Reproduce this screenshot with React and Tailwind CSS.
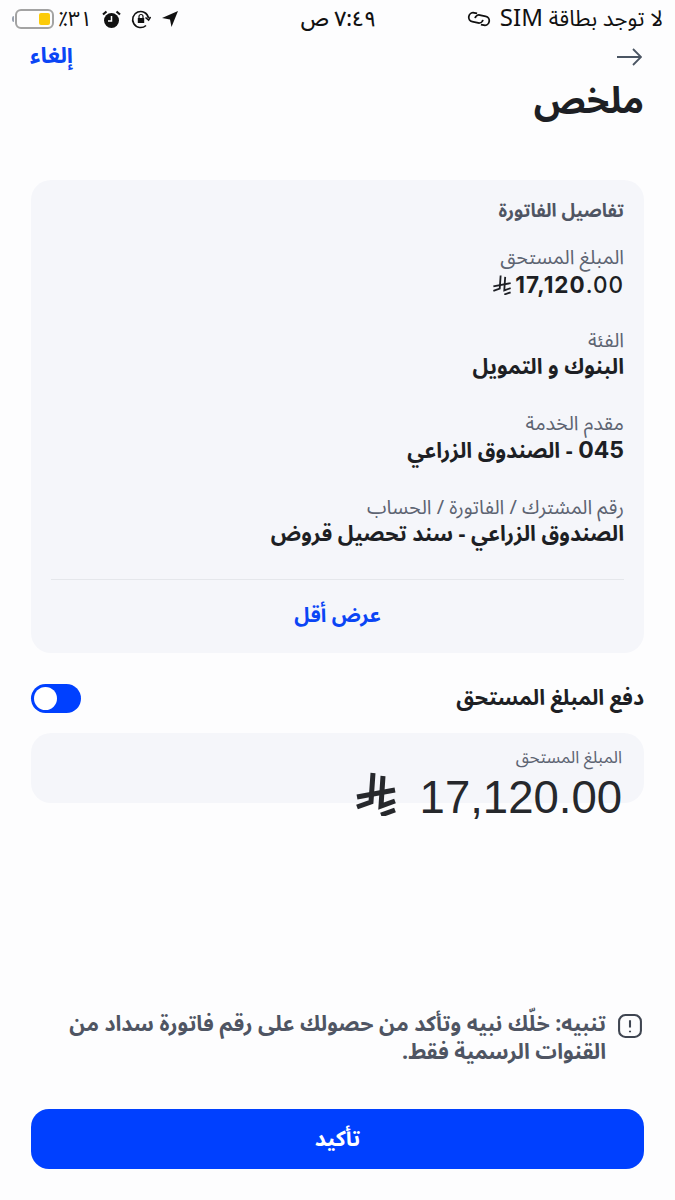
import React from 'react';

const font = { fontFamily: '"Noto Sans Arabic", "DejaVu Sans", sans-serif' };

// New riyal sign, drawn as strokes because no font here carries it
const RiyalSign = ({ className, weight = 5 }) => (
    <svg viewBox="0 0 40 44" className={className} fill="none" stroke="currentColor" strokeWidth={weight}>
        <path d="M17 1 L15 30 L1 35" />
        <path d="M1 25 L39 18" />
        <path d="M27 4 L25 34 L39 29" />
        <path d="M25 43 L39 38" />
    </svg>
);

const StatusBar = () => (
    <div className="flex h-[38px] shrink-0 items-center justify-between pl-[12px] pr-[12px] text-[21px] leading-[26px] text-[#111]">
        <div className="flex items-center gap-[8px]">
            <span className="text-[22px]">لا توجد بطاقة <span className="text-[24px]">SIM</span></span>
            <svg width="26" height="16" viewBox="0 0 26 16" fill="none" stroke="#111" strokeWidth="1.8" className="rotate-[12deg]">
                <path d="M10 3 H7 a4.5 4.5 0 0 0 0 9 H13 a4 4 0 0 0 4 -4" />
                <path d="M16 13 H19 a4.5 4.5 0 0 0 0 -9 H13 a4 4 0 0 0 -4 4" />
            </svg>
        </div>
        <span className="ml-[32px] font-medium">٧:٤٩ ص</span>
        <div className="flex items-center gap-[10px]">
            <svg width="18" height="18" viewBox="0 0 18 18" fill="#111"><path d="M17 1 L1 8 L9 9.5 L10.5 17 Z" /></svg>
            <svg width="20" height="20" viewBox="0 0 20 20" fill="none" stroke="#111" strokeWidth="1.6">
                <path d="M17.5 9 A8 8 0 1 0 15 16.5" />
                <path d="M14.5 8.5 L17.6 11 L19.5 8" />
                <rect x="6.8" y="9" width="6.4" height="5" fill="#111" stroke="none" />
                <path d="M8 9 V7.5 a2 2 0 0 1 4 0 V9" strokeWidth="1.2" />
            </svg>
            <svg width="19" height="19" viewBox="0 0 19 19">
                <circle cx="9.5" cy="10.5" r="7.5" fill="#111" />
                <path d="M9.5 6 V11 H6" fill="none" stroke="#fff" strokeWidth="1.5" />
                <path d="M1 4.5 L4.5 1.5 M18 4.5 L14.5 1.5" stroke="#111" strokeWidth="2.2" />
            </svg>
            <div className="flex items-center gap-[4px]">
                <span>٣١٪</span>
                <div className="flex items-center" dir="ltr">
                    <div className="h-[6px] w-[2px] rounded-l-sm bg-gray-400"></div>
                    <div className="ml-[1px] flex h-[20px] w-[39px] justify-end rounded-[6px] border-2 border-[#a3a3a3] p-[2px]">
                        <div className="w-[11px] rounded-[2px] bg-[#fccb0a]"></div>
                    </div>
                </div>
            </div>
        </div>
    </div>
);

const Field = ({ label, children }) => (
    <div className="mb-[31px]">
        <p className="text-[19.8px] leading-[25px] text-[#5d6472]">{label}</p>
        <div className="text-[21.4px] font-bold leading-[27px] text-[#1d1f24]">{children}</div>
    </div>
);

const App = () => {
    return (
        <div dir="rtl" style={font} className="flex h-[1200px] w-[675px] flex-col overflow-hidden bg-[#fdfdfe]">
            <StatusBar />

            <div className="flex h-[38px] items-center justify-between pl-[30px] pr-[33px]">
                <svg width="25" height="18" viewBox="0 0 25 18" fill="none" stroke="#4b5563" strokeWidth="1.8">
                    <path d="M0 9 H24 M16 1 L24 9 L16 17" />
                </svg>
                <button className="text-[22.5px] font-bold text-[#0b45f5]">إلغاء</button>
            </div>
            <h1 className="pr-[31px] text-[36.5px] font-bold leading-[52px] text-[#1d1f24]">ملخص</h1>

            <div className="mx-[31px] mt-[52px] h-[473px] rounded-[20px] bg-[#f5f6fa] px-[20px] pt-[18px]">
                <h2 className="mb-[20px] text-[18.5px] font-bold leading-[28px] text-[#4f5563]">تفاصيل الفاتورة</h2>
                <Field label="المبلغ المستحق">
                    <div dir="ltr" className="flex items-center justify-end gap-[3px] font-['Inter'] text-[22.5px] tracking-[1px]">
                        <RiyalSign className="h-[20px] w-[20px]" weight={4} />
                        <span>17,120<span className="font-medium">.00</span></span>
                    </div>
                </Field>
                <Field label="الفئة">البنوك و التمويل</Field>
                <Field label="مقدم الخدمة"><span className="font-['Inter'] text-[23px] tracking-[0.5px]">045</span> - الصندوق الزراعي</Field>
                <Field label="رقم المشترك / الفاتورة / الحساب">الصندوق الزراعي - سند تحصيل قروض</Field>
                <div className="mt-[11px] border-t border-[#e5e7eb] pt-[22px] text-center text-[20.5px] font-bold leading-[28px] text-[#0b45f5]">عرض أقل</div>
            </div>

            <div className="mx-[31px] mt-[31px] flex h-[29px] items-center justify-between">
                <span className="text-[21.5px] font-bold text-[#1d1f24]">دفع المبلغ المستحق</span>
                <div dir="ltr" className="flex h-[29px] w-[50px] items-center rounded-full bg-[#0040ff] pl-[3px]">
                    <div className="h-[23px] w-[23px] rounded-full bg-white"></div>
                </div>
            </div>

            <div className="mx-[31px] mt-[20px] h-[70px] rounded-[20px] bg-[#f5f6fa] px-[22px] pt-[12px]">
                <p className="text-[17px] leading-[27px] text-[#5d6472]">المبلغ المستحق</p>
                <div dir="ltr" className="flex items-center justify-end gap-[23px] text-[#26282c]">
                    <RiyalSign className="h-[44px] w-[42px] -translate-y-[4px]" />
                    <span className="font-['Liberation_Sans'] text-[45.5px] leading-[52px]">17,120.00</span>
                </div>
            </div>

            <div className="mx-[31px] mt-auto flex items-start gap-[11px] pl-[29px] pr-[1px]">
                <svg width="26" height="26" viewBox="0 0 25 25" fill="none" stroke="#3f4551" strokeWidth="2" className="mt-[2px] shrink-0">
                    <rect x="2" y="2" width="21" height="21" rx="6" />
                    <path d="M12.5 7 V14 M12.5 17 V18.5" />
                </svg>
                <p className="text-[21.4px] font-bold leading-[28px] text-[#4f5563]">تنبيه: خلّك نبيه وتأكد من حصولك على رقم فاتورة سداد من القنوات الرسمية فقط.</p>
            </div>

            <button className="mx-[31px] mb-[31px] mt-[42px] h-[60px] shrink-0 rounded-[18px] bg-[#0040ff] text-[21.5px] font-bold text-white">تأكيد</button>
        </div>
    );
};

export default App;
